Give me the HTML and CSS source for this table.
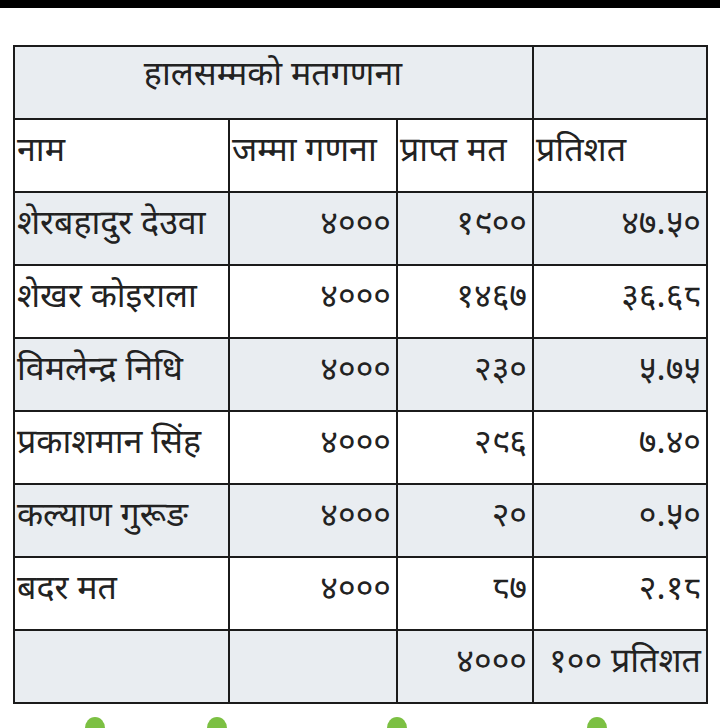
FILE: index.html
```html
<!DOCTYPE html>
<html lang="ne">
<head>
<meta charset="utf-8">
<title>हालसम्मको मतगणना</title>
<link rel="stylesheet" href="styles.css">
</head>
<body>
<div class="topbar"></div>
<main class="page">
  <table class="results">
    <colgroup>
      <col class="c-name">
      <col class="c-total">
      <col class="c-got">
      <col class="c-pct">
    </colgroup>
    <tr class="shade title-row">
      <td colspan="3" class="title">हालसम्मको मतगणना</td>
      <td></td>
    </tr>
    <tr class="head">
      <td>नाम</td>
      <td>जम्मा गणना</td>
      <td>प्राप्त मत</td>
      <td>प्रतिशत</td>
    </tr>
    <tr class="shade">
      <td>शेरबहादुर देउवा</td>
      <td class="num">४०००</td>
      <td class="num">१९००</td>
      <td class="num">४७.५०</td>
    </tr>
    <tr>
      <td>शेखर कोइराला</td>
      <td class="num">४०००</td>
      <td class="num">१४६७</td>
      <td class="num">३६.६८</td>
    </tr>
    <tr class="shade">
      <td>विमलेन्द्र निधि</td>
      <td class="num">४०००</td>
      <td class="num">२३०</td>
      <td class="num">५.७५</td>
    </tr>
    <tr>
      <td>प्रकाशमान सिंह</td>
      <td class="num">४०००</td>
      <td class="num">२९६</td>
      <td class="num">७.४०</td>
    </tr>
    <tr class="shade">
      <td>कल्याण गुरूङ</td>
      <td class="num">४०००</td>
      <td class="num">२०</td>
      <td class="num">०.५०</td>
    </tr>
    <tr>
      <td>बदर मत</td>
      <td class="num">४०००</td>
      <td class="num">८७</td>
      <td class="num">२.१८</td>
    </tr>
    <tr class="shade">
      <td></td>
      <td></td>
      <td class="num">४०००</td>
      <td class="num">१०० प्रतिशत</td>
    </tr>
  </table>
  <div class="greens">
    <span class="blob b1"></span>
    <span class="blob b2"></span>
    <span class="blob b3"></span>
    <span class="blob b4"></span>
  </div>
</main>
</body>
</html>
```
FILE: styles.css
```css
html, body {
  margin: 0;
  padding: 0;
  background: #ffffff;
}
body {
  font-family: "Noto Sans Devanagari", "Lohit Devanagari", "Noto Sans", "Liberation Sans", sans-serif;
  color: #222;
  height: 728px;
  overflow: hidden;
}
.topbar {
  height: 8px;
  background: #000;
}
.page {
  padding: 37px 0 0 13px;
}
.results {
  border-collapse: collapse;
  table-layout: fixed;
  width: 693px;
  border: 2px solid #1b1b1b;
}
.c-name { width: 215px; }
.c-total { width: 168px; }
.c-got { width: 136px; }
.c-pct { width: 174px; }
.results td {
  border: 2px solid #1b1b1b;
  height: 60px;
  padding: 11px 3px 0 2px;
  vertical-align: top;
  font-size: 34px;
  line-height: 44px;
  white-space: nowrap;
  overflow: hidden;
}
.results tr.title-row td {
  height: 63px;
  padding-top: 8px;
}
.results tr.shade td {
  background: #e9edf1;
}
.results td.title {
  text-align: center;
}
.results td.num {
  text-align: right;
  padding-right: 5px;
}
.greens {
  position: relative;
  height: 30px;
}
.blob {
  position: absolute;
  top: 13px;
  width: 20px;
  height: 22px;
  border-radius: 50% 50% 40% 40%;
  background: #7cc043;
}
.b1 { left: 72px; }
.b2 { left: 194px; }
.b3 { left: 374px; }
.b4 { left: 574px; }
```
